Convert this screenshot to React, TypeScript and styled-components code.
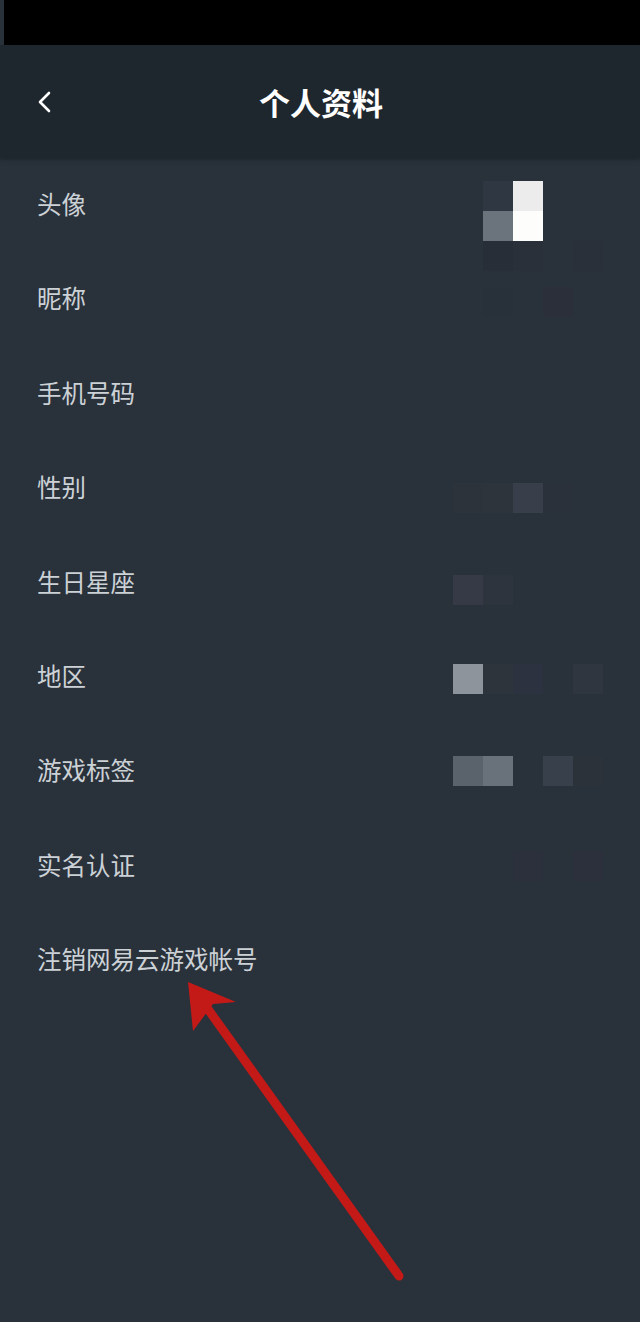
import React from "react";
import styled, { createGlobalStyle } from "styled-components";

const GlobalStyle = createGlobalStyle`
    html, body {
        margin: 0;
        padding: 0;
        background: #29313b;
    }
    body {
        font-family: "Noto Sans CJK SC", "Noto Sans", sans-serif;
    }
`

const Page = styled.div`
    position: relative;
    width: 640px;
    height: 1322px;
    background: #29313b;
    overflow: hidden;
    display: flex;
    flex-direction: column;
`

const StatusBar = styled.div`
    height: 45px;
    margin-left: 4px;
    background: #000;
`

const Header = styled.div`
    height: 113px;
    background: #1f272e;
    display: flex;
    align-items: center;
    justify-content: center;
    position: relative;
    box-shadow: 0 2px 4px rgba(20, 25, 30, 0.5);
    z-index: 1;
`

const BackButton = styled.div`
    position: absolute;
    left: 34px;
    top: 44px;
    width: 22px;
    height: 26px;
    display: flex;
`

const Title = styled.h1`
    margin: 0 0 0 2px;
    font-size: 31px;
    font-weight: 700;
    color: #ffffff;
    letter-spacing: 0;
    transform: translateY(0px);
`

const List = styled.div`
    display: flex;
    flex-direction: column;
`

const Row = styled.div`
    height: 94.4px;
    display: flex;
    align-items: center;
    padding-left: 37px;
    position: relative;
`

const Label = styled.span`
    font-size: 24.5px;
    line-height: 1;
    color: #ccd1d6;
    flex: 1;
    transform: translateY(-1px);
`

const Mosaic = styled.div<{ $shift: number }>`
    position: absolute;
    left: 453px;
    top: 50%;
    display: grid;
    grid-template-columns: repeat(6, 30px);
    grid-auto-rows: 30px;
    transform: translateY(calc(-15px + ${p => p.$shift}px));
`

const Cell = styled.div<{ $c: string }>`
    background: ${p => p.$c};
`

type Cells = (string | null)[][]

const MosaicBlock = ({ cells, shift }: { cells: Cells, shift: number }) => (
    <Mosaic $shift={shift}>
        {cells.flatMap((r, ri) => r.map((c, ci) => (
            <Cell key={ri + "-" + ci} $c={c ?? "transparent"} />
        )))}
    </Mosaic>
)

const rows: { label: string, cells?: Cells, shift?: number }[] = [
    {
        label: "头像", shift: -9, cells: [
            [null, "#2f3743", "#ececec", null, null, null],
            [null, "#6b737d", "#fdfdfb", null, null, null],
            [null, "#272e38", "#29303a", null, "#2a303a", null],
        ]
    },
    { label: "昵称", shift: 2, cells: [[null, "#28303a", null, "#2a2f3a", null, null]] },
    { label: "手机号码" },
    { label: "性别", shift: 10, cells: [["#2c333b", "#2d343c", "#383e4a", "#2a313a", null, null]] },
    { label: "生日星座", shift: 7, cells: [["#353a46", "#2e343e", null, null, null, null]] },
    { label: "地区", shift: 2, cells: [["#8d949c", "#2d343b", "#2c3240", null, "#2f363f", null]] },
    { label: "游戏标签", shift: -1, cells: [["#5a626c", "#69717b", null, "#38404b", "#2b323a", null]] },
    { label: "实名认证", shift: 0, cells: [[null, null, "#2b303c", null, "#2b303c", null]] },
    { label: "注销网易云游戏帐号" },
]

const ArrowLayer = styled.svg`
    position: absolute;
    left: 0;
    top: 0;
    pointer-events: none;
`

export default function App() {
    return (
        <>
            <GlobalStyle />
            <Page>
                <StatusBar />
                <Header>
                    <BackButton>
                        <svg width="22" height="26" viewBox="0 0 22 26">
                            <path d="M15 4 L6 13 L15 22" fill="none" stroke="#fff" strokeWidth="2.6" strokeLinecap="round" strokeLinejoin="round" />
                        </svg>
                    </BackButton>
                    <Title>个人资料</Title>
                </Header>
                <List>
                    {rows.map(r => (
                        <Row key={r.label}>
                            <Label>{r.label}</Label>
                            {r.cells && <MosaicBlock cells={r.cells} shift={r.shift ?? 0} />}
                        </Row>
                    ))}
                </List>
                <ArrowLayer width="640" height="1322" viewBox="0 0 640 1322">
                    <line x1="399" y1="1276" x2="200" y2="998" stroke="#c41a17" strokeWidth="9" strokeLinecap="round" />
                    <path d="M188 982 L236 1002 L213 1004 L193 1031 Z" fill="#c41a17" />
                </ArrowLayer>
            </Page>
        </>
    )
}
